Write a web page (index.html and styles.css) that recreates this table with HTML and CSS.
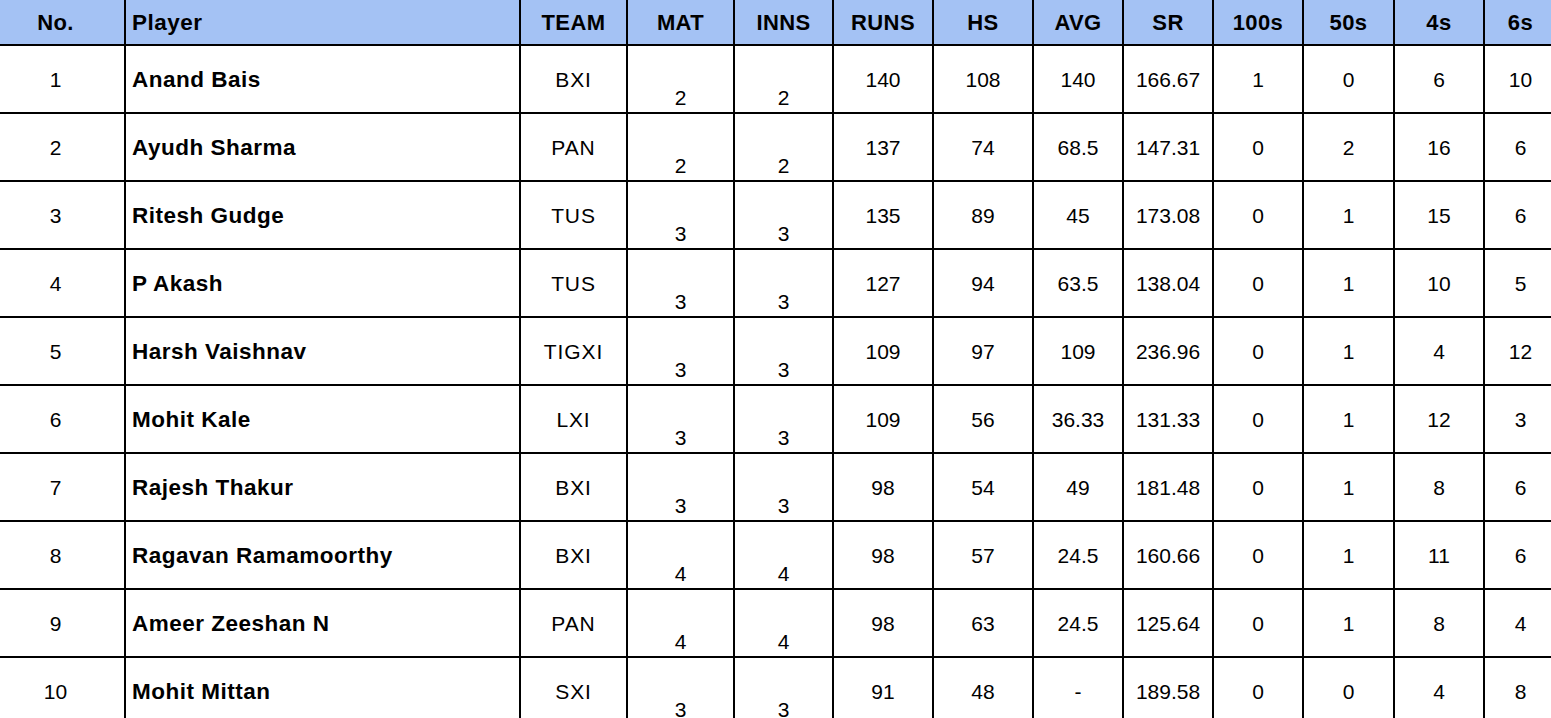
FILE: index.html
```html
<!DOCTYPE html>
<html>
<head>
<meta charset="utf-8">
<link rel="stylesheet" href="styles.css">
</head>
<body>
<div class="table">
  <div class="row head">
    <div class="c no">No.</div><div class="c player">Player</div><div class="c">TEAM</div><div class="c">MAT</div><div class="c">INNS</div><div class="c">RUNS</div><div class="c">HS</div><div class="c">AVG</div><div class="c">SR</div><div class="c">100s</div><div class="c">50s</div><div class="c">4s</div><div class="c last">6s</div>
  </div>
  <div class="row"><div class="c no">1</div><div class="c player">Anand Bais</div><div class="c team">BXI</div><div class="c low">2</div><div class="c low">2</div><div class="c">140</div><div class="c">108</div><div class="c">140</div><div class="c">166.67</div><div class="c">1</div><div class="c">0</div><div class="c">6</div><div class="c last">10</div></div>
  <div class="row"><div class="c no">2</div><div class="c player">Ayudh Sharma</div><div class="c team">PAN</div><div class="c low">2</div><div class="c low">2</div><div class="c">137</div><div class="c">74</div><div class="c">68.5</div><div class="c">147.31</div><div class="c">0</div><div class="c">2</div><div class="c">16</div><div class="c last">6</div></div>
  <div class="row"><div class="c no">3</div><div class="c player">Ritesh Gudge</div><div class="c team">TUS</div><div class="c low">3</div><div class="c low">3</div><div class="c">135</div><div class="c">89</div><div class="c">45</div><div class="c">173.08</div><div class="c">0</div><div class="c">1</div><div class="c">15</div><div class="c last">6</div></div>
  <div class="row"><div class="c no">4</div><div class="c player">P Akash</div><div class="c team">TUS</div><div class="c low">3</div><div class="c low">3</div><div class="c">127</div><div class="c">94</div><div class="c">63.5</div><div class="c">138.04</div><div class="c">0</div><div class="c">1</div><div class="c">10</div><div class="c last">5</div></div>
  <div class="row"><div class="c no">5</div><div class="c player">Harsh Vaishnav</div><div class="c team">TIGXI</div><div class="c low">3</div><div class="c low">3</div><div class="c">109</div><div class="c">97</div><div class="c">109</div><div class="c">236.96</div><div class="c">0</div><div class="c">1</div><div class="c">4</div><div class="c last">12</div></div>
  <div class="row"><div class="c no">6</div><div class="c player">Mohit Kale</div><div class="c team">LXI</div><div class="c low">3</div><div class="c low">3</div><div class="c">109</div><div class="c">56</div><div class="c">36.33</div><div class="c">131.33</div><div class="c">0</div><div class="c">1</div><div class="c">12</div><div class="c last">3</div></div>
  <div class="row"><div class="c no">7</div><div class="c player">Rajesh Thakur</div><div class="c team">BXI</div><div class="c low">3</div><div class="c low">3</div><div class="c">98</div><div class="c">54</div><div class="c">49</div><div class="c">181.48</div><div class="c">0</div><div class="c">1</div><div class="c">8</div><div class="c last">6</div></div>
  <div class="row"><div class="c no">8</div><div class="c player">Ragavan Ramamoorthy</div><div class="c team">BXI</div><div class="c low">4</div><div class="c low">4</div><div class="c">98</div><div class="c">57</div><div class="c">24.5</div><div class="c">160.66</div><div class="c">0</div><div class="c">1</div><div class="c">11</div><div class="c last">6</div></div>
  <div class="row"><div class="c no">9</div><div class="c player">Ameer Zeeshan N</div><div class="c team">PAN</div><div class="c low">4</div><div class="c low">4</div><div class="c">98</div><div class="c">63</div><div class="c">24.5</div><div class="c">125.64</div><div class="c">0</div><div class="c">1</div><div class="c">8</div><div class="c last">4</div></div>
  <div class="row"><div class="c no">10</div><div class="c player">Mohit Mittan</div><div class="c team">SXI</div><div class="c low">3</div><div class="c low">3</div><div class="c">91</div><div class="c">48</div><div class="c">-</div><div class="c">189.58</div><div class="c">0</div><div class="c">0</div><div class="c">4</div><div class="c last">8</div></div>
</div>
</body>
</html>
```

FILE: styles.css
```css
html, body {
  margin: 0;
  padding: 0;
  background: #ffffff;
  overflow: hidden;
}

.table {
  display: grid;
  grid-template-columns: 124px 393px 105px 105px 97px 98px 98px 88px 88px 88px 89px 88px 66px;
  grid-auto-rows: 66px;
  grid-template-rows: 44px;
  gap: 2px;
  background: #000000;
  width: 1551px;
  font-family: "Liberation Sans", Arial, sans-serif;
  font-size: 21px;
  color: #000000;
}

.row {
  display: contents;
}

.c {
  background: #ffffff;
  display: flex;
  align-items: center;
  justify-content: center;
  line-height: 23px;
  white-space: nowrap;
}

.head .c {
  background: #a4c2f4;
  font-weight: bold;
  font-size: 22px;
  letter-spacing: 0.4px;
}

.c.no {
  padding-right: 13px;
}

.c.player {
  justify-content: flex-start;
  padding-left: 6px;
}

.row .c.player {
  font-weight: bold;
  font-size: 22.5px;
  letter-spacing: 0.5px;
}

.c.team {
  letter-spacing: 0.9px;
}

.c.low {
  align-items: flex-end;
  padding-bottom: 3px;
}

.c.last {
  padding-left: 5px;
}
```
